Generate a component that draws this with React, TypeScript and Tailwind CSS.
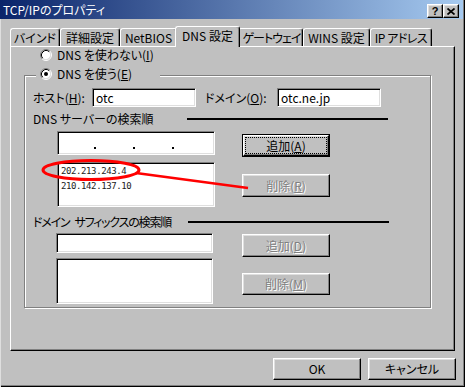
import React from "react";

function Radio({ checked }: { checked?: boolean }) {
  return (
    <svg width="12" height="12" viewBox="0 0 12 12" className="shrink-0">
      <circle cx="6" cy="6" r="4.5" fill="#fff" />
      <path d="M2.11 9.89 A5.5 5.5 0 0 1 9.89 2.11" fill="none" stroke="#808080" strokeWidth="1" />
      <path d="M9.89 2.11 A5.5 5.5 0 0 1 2.11 9.89" fill="none" stroke="#ffffff" strokeWidth="1" />
      <path d="M2.82 9.18 A4.5 4.5 0 0 1 9.18 2.82" fill="none" stroke="#000" strokeWidth="1" />
      <path d="M9.18 2.82 A4.5 4.5 0 0 1 2.82 9.18" fill="none" stroke="#dfdfdf" strokeWidth="1" />
      {checked && <circle cx="6" cy="6" r="2" fill="#000" />}
    </svg>
  );
}

function TitleBtn({ children }: { children: React.ReactNode }) {
  return (
    <div className="w-[16px] h-[14px] bg-[#c0c0c0] border border-t-white border-l-white border-r-black border-b-black shadow-[inset_-1px_-1px_0_#808080,inset_1px_1px_0_#dfdfdf] flex items-center justify-center">
      {children}
    </div>
  );
}

function Tab({ cls, sel, children }: { cls: string; sel?: boolean; children: React.ReactNode }) {
  return (
    <div
      className={`${cls} ${
        sel ? "h-[21px] -mb-[1px] -mx-[2px] relative z-10 pb-[2px]" : "h-[18px]"
      } shrink-0 flex items-center justify-center bg-[#c0c0c0] border-t border-l border-t-white border-l-white border-r border-r-black shadow-[inset_-1px_0_0_#808080] rounded-t-[3px] leading-none whitespace-nowrap`}
    >
      {children}
    </div>
  );
}

function Field({ cls, children }: { cls: string; children?: React.ReactNode }) {
  return (
    <div
      className={`${cls} bg-white border border-t-[#808080] border-l-[#808080] border-r-white border-b-white shadow-[inset_1px_1px_0_#000,inset_-1px_-1px_0_#dfdfdf] flex`}
    >
      {children}
    </div>
  );
}

function Btn({
  cls,
  disabled,
  def,
  children,
}: {
  cls: string;
  disabled?: boolean;
  def?: boolean;
  children: React.ReactNode;
}) {
  const label = (
    <span
      className={`leading-none whitespace-nowrap ${
        disabled ? "text-[#808080] [text-shadow:1px_1px_0_#fff]" : "text-black"
      }`}
    >
      {children}
    </span>
  );
  if (def) {
    return (
      <div className={`${cls} border border-black flex`}>
        <div className="flex-1 flex bg-[#c0c0c0] border border-t-white border-l-white border-r-black border-b-black shadow-[inset_-1px_-1px_0_#808080,inset_1px_1px_0_#dfdfdf]">
          <div className="flex-1 m-[1px] border border-dotted border-black flex items-center justify-center">
            {label}
          </div>
        </div>
      </div>
    );
  }
  return (
    <div
      className={`${cls} bg-[#c0c0c0] border border-t-white border-l-white border-r-black border-b-black shadow-[inset_-1px_-1px_0_#808080,inset_1px_1px_0_#dfdfdf] flex items-center justify-center`}
    >
      {label}
    </div>
  );
}

export default function App() {
  return (
    <div className="relative w-[465px] h-[387px] bg-[#c0c0c0] overflow-hidden font-['Noto_Sans_CJK_JP','Noto_Sans',sans-serif] [font-feature-settings:'palt'] text-[12px] text-black shadow-[inset_1px_0_0_#dfdfdf,inset_-1px_-1px_0_#000,inset_-2px_-2px_0_#808080] flex flex-col">
      {/* Title bar */}
      <div className="h-[19px] mr-[2px] shrink-0 flex items-start bg-[linear-gradient(to_right,#0a246a,#a6caf0)]">
        <div className="pl-[3px] h-[19px] flex items-center text-white leading-none whitespace-nowrap">
          TCP/IPのプロパティ
        </div>
        <div className="ml-auto mt-[4px] mr-[4px] flex">
          <TitleBtn>
            <span className="font-['Liberation_Sans',sans-serif] font-bold text-[11px] leading-none">?</span>
          </TitleBtn>
          <TitleBtn>
            <svg width="8" height="7" viewBox="0 0 8 7">
              <path d="M0.5 0.5 L7.5 6.5 M7.5 0.5 L0.5 6.5" stroke="#000" strokeWidth="1.7" />
            </svg>
          </TitleBtn>
        </div>
      </div>

      {/* Tabs */}
      <div className="mt-[7px] ml-[10px] h-[20px] shrink-0 flex items-end">
        <Tab cls="w-[50px]">バインド</Tab>
        <Tab cls="w-[60px]">詳細設定</Tab>
        <Tab cls="w-[57px]">NetBIOS</Tab>
        <Tab cls="w-[65px]" sel>
          DNS 設定
        </Tab>
        <Tab cls="w-[65px] pl-[2px] tracking-[-1px]">ゲートウェイ</Tab>
        <Tab cls="w-[67px]">WINS 設定</Tab>
        <Tab cls="w-[62px] tracking-[-0.5px]">IP アドレス</Tab>
      </div>

      {/* Tab panel */}
      <div className="ml-[10px] w-[445px] h-[305px] shrink-0 border-t border-l border-t-white border-l-white border-r border-b border-r-black border-b-black shadow-[inset_-1px_-1px_0_#808080] flex flex-col">
        <div className="h-[16px] pl-[29px] flex items-center">
          <Radio />
          <span className="ml-[5px] leading-none whitespace-nowrap">
            DNS を使わない(<span className="underline">I</span>)
          </span>
        </div>

        {/* Group box */}
        <div className="mt-[12px] ml-[13px] w-[407px] h-[233px] border border-[#808080] shadow-[inset_1px_1px_0_#fff,1px_1px_0_#fff] flex flex-col">
          <div className="-mt-[10px] ml-[11px] w-[124px] h-[16px] pl-[4px] bg-[#c0c0c0] flex items-center self-start">
            <Radio checked />
            <span className="ml-[5px] leading-none whitespace-nowrap">
              DNS を使う(<span className="underline">E</span>)
            </span>
          </div>

          {/* Host / domain */}
          <div className="mt-[6px] ml-[8px] h-[19px] flex items-center">
            <div className="w-[59px] leading-none whitespace-nowrap">
              ホスト(<span className="underline">H</span>):
            </div>
            <Field cls="w-[104px] h-[19px] items-center pl-[3px]">
              <span className="leading-none">otc</span>
            </Field>
            <div className="w-[81px] pl-[9px] leading-none whitespace-nowrap">
              ドメイン(<span className="underline">O</span>):
            </div>
            <Field cls="w-[104px] h-[19px] items-center pl-[3px]">
              <span className="leading-none">otc.ne.jp</span>
            </Field>
          </div>

          {/* DNS server section */}
          <div className="mt-[5px] ml-[8px] h-[14px] flex items-center">
            <div className="w-[154px] leading-none whitespace-nowrap">DNS サーバーの検索順</div>
            <div className="w-[201px] h-[2px] bg-black" />
          </div>

          <div className="mt-[5px] ml-[32px] flex items-start">
            <div className="w-[158px] flex flex-col">
              <Field cls="h-[24px] items-end pb-[5px] pl-[36px] gap-[37px]">
                <div className="w-[2px] h-[2px] bg-black" />
                <div className="w-[2px] h-[2px] bg-black" />
                <div className="w-[2px] h-[2px] bg-black" />
              </Field>
              <Field cls="mt-[7px] h-[45px] flex-col pt-[1px] pl-[3px]">
                <div className="h-[15px] flex items-center font-['DejaVu_Sans_Mono',monospace] text-[9px] tracking-[-0.4px] leading-none text-[#222]">
                  202.213.243.4
                </div>
                <div className="h-[15px] flex items-center font-['DejaVu_Sans_Mono',monospace] text-[9px] tracking-[-0.4px] leading-none text-[#222]">
                  210.142.137.10
                </div>
              </Field>
            </div>
            <div className="ml-[27px] pt-[3px] w-[88px] flex flex-col">
              <Btn cls="h-[23px]" def>
                追加(<span className="underline">A</span>)
              </Btn>
              <Btn cls="mt-[17px] h-[23px]" disabled>
                削除(<span className="underline">R</span>)
              </Btn>
            </div>
          </div>

          {/* Domain suffix section */}
          <div className="mt-[8px] ml-[8px] h-[14px] flex items-center">
            <div className="w-[155px] leading-none whitespace-nowrap tracking-[-1.2px]">
              ドメイン<span className="ml-[5px]">サフィックスの検索順</span>
            </div>
            <div className="w-[201px] h-[2px] bg-black" />
          </div>

          <div className="mt-[4px] ml-[31px] flex items-start">
            <div className="w-[157px] flex flex-col">
              <Field cls="h-[20px]" />
              <Field cls="mt-[5px] h-[46px]" />
            </div>
            <div className="ml-[29px] pt-[1px] w-[88px] flex flex-col">
              <Btn cls="h-[23px]" disabled>
                追加(<span className="underline">D</span>)
              </Btn>
              <Btn cls="mt-[16px] h-[22px]" disabled>
                削除(<span className="underline">M</span>)
              </Btn>
            </div>
          </div>
        </div>
      </div>

      {/* OK / Cancel */}
      <div className="mt-[7px] pr-[9px] flex justify-end gap-[7px]">
        <Btn cls="w-[88px] h-[22px]">OK</Btn>
        <Btn cls="w-[88px] h-[22px]">キャンセル</Btn>
      </div>

      {/* Red annotation */}
      <svg width="465" height="387" className="absolute left-0 top-0 pointer-events-none">
        <ellipse cx="91" cy="170" rx="48" ry="9.5" fill="none" stroke="#f00" strokeWidth="3" />
        <line x1="136" y1="173" x2="248" y2="188" stroke="#f00" strokeWidth="2.5" />
      </svg>
    </div>
  );
}
